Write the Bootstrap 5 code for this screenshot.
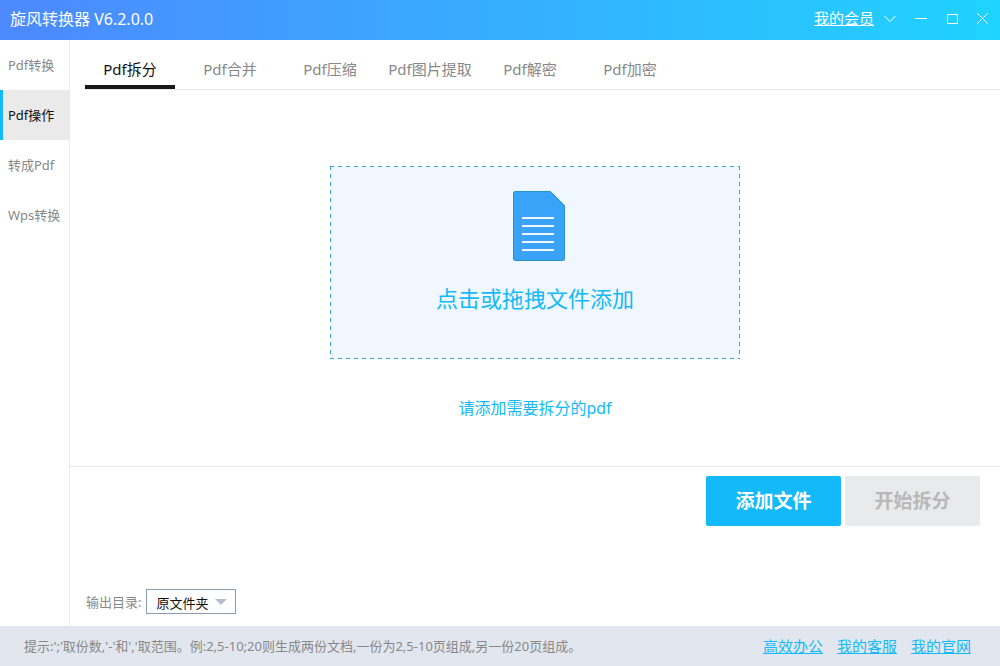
<!DOCTYPE html>
<html lang="zh-CN">
<head>
<meta charset="utf-8">
<meta name="viewport" content="width=device-width, initial-scale=1">
<title>旋风转换器</title>
<link href="https://cdn.jsdelivr.net/npm/bootstrap@5.3.0/dist/css/bootstrap.min.css" rel="stylesheet">
<style>
  :root { --accent: #14b9f9; --line: #e9e9e9; --dim: #888; }
  body { font-family: "Noto Sans", "Noto Sans CJK SC", sans-serif; font-size: 13px; line-height: 20px; color: var(--dim); background: #fff; }
  .title-bar { height: 40px; background: linear-gradient(90deg, #4d88ff, #1fd3ff); color: #fff; padding: 0 11px 2px 10px; }
  .app-title { font-size: 16px; font-weight: 400; line-height: 20px; }
  .title-bar a { margin-right: 10px; padding-bottom: 2px; font-size: 15px; color: #fff; }
  .win-btns { gap: 19px; }
  .win-btn { width: 12px; height: 12px; color: #fff; }
  .win-btn svg { display: block; }
  .side-nav { width: 70px; border-right: 1px solid var(--line); }
  .side-nav .nav-link { height: 50px; padding: 15px 0 15px 8px; color: var(--dim); white-space: nowrap; line-height: 20px; }
  .side-nav .nav-link.active { background: #eaeaea; color: #111; border-left: 3px solid var(--accent); padding-left: 5px; }
  .tab-row { height: 50px; margin-left: 15px; gap: 10px; border-bottom: 1px solid var(--line); }
  .tab-row .nav-link { width: 90px; height: 49px; padding: 19px 0 6px; border-bottom: 4px solid transparent; border-radius: 0; font-size: 15px; line-height: 20px; text-align: center; white-space: nowrap; color: var(--dim); }
  .tab-row .nav-link.active { color: #111; border-color: #181818; }
  .drop-zone { width: 410px; max-width: 100%; height: 193px; margin-top: 76px; padding: 25px 0 0; border: 0; color: var(--accent); font-size: 22px; line-height: 30px;
    --h: repeating-linear-gradient(90deg, #3ba4ca 0 4px, transparent 4px 8px);
    --v: repeating-linear-gradient(180deg, #3ba4ca 0 4px, transparent 4px 8px);
    background: var(--h) top / 100% 1px no-repeat, var(--h) bottom / 100% 1px no-repeat, var(--v) left / 1px 100% no-repeat, var(--v) right / 1px 100% no-repeat, #f0f7ff; }
  .drop-zone svg { margin: 0 0 22px 8px; }
  .hint { margin-top: 39px; font-size: 16px; color: var(--accent); }
  .action-pane { height: 160px; border-top: 1px solid var(--line); padding: 9px 20px 12px 16px; }
  .big-btn { width: 135px; height: 50px; padding: 0; border: 0; border-radius: 2px; font-size: 19px; font-weight: 700; color: #fff; background: var(--accent); }
  .big-btn:hover { color: #fff; background: #0fabea; }
  .big-btn:disabled { color: #b8b8b8; background: #e9eaec; opacity: 1; }
  .dir-label { margin-right: 5px; }
  .dir-select { width: 90px; height: 25px; padding: 2px 0 0 9px; border: 1px solid #8c9bb0; border-radius: 0; font-size: 13px; line-height: 20px; color: #111; background-color: #fff; background-position: right 8px center; background-size: 12px 6px;
    background-image: url("data:image/svg+xml,%3csvg xmlns='http://www.w3.org/2000/svg' viewBox='0 0 12 6'%3e%3cpath fill='%23b3bfca' d='M0 0h12L6 6z'/%3e%3c/svg%3e"); }
  .status-bar { height: 40px; padding: 0 29px 0 24px; background: #e2e7ef; }
  .status-bar nav { gap: 14px; }
  .status-bar a { font-size: 15px; color: var(--accent); }
</style>
</head>
<body>
<div class="d-flex flex-column min-vh-100">
  <header class="title-bar d-flex align-items-center">
    <h1 class="app-title mb-0 me-auto">旋风转换器 V6.2.0.0</h1>
    <a href="#">我的会员</a>
    <div class="win-btns d-flex">
      <button class="btn p-0 border-0 rounded-0 win-btn" aria-label="展开菜单"><svg width="12" height="12" viewBox="0 0 12 12" fill="none" stroke="currentColor"><path d="M.5 3 6 8.500 11.500 3"/></svg></button>
      <button class="btn p-0 border-0 rounded-0 win-btn" aria-label="最小化"><svg width="12" height="12" viewBox="0 0 12 12" fill="none" stroke="currentColor"><path d="M0 5.500h12"/></svg></button>
      <button class="btn p-0 border-0 rounded-0 win-btn" aria-label="最大化"><svg width="12" height="12" viewBox="0 0 12 12" fill="none" stroke="currentColor"><path d="M1.500 1.500h10v9h-10z"/></svg></button>
      <button class="btn p-0 border-0 rounded-0 win-btn" aria-label="关闭"><svg width="12" height="12" viewBox="0 0 12 12" fill="none" stroke="currentColor"><path d="m0 0 11 11M11 0 0 11"/></svg></button>
    </div>
  </header>

  <div class="d-flex flex-grow-1">
    <nav class="side-nav nav flex-column flex-nowrap flex-shrink-0" aria-label="功能">
      <a class="nav-link" href="#">Pdf转换</a>
      <a class="nav-link active" href="#" aria-current="page">Pdf操作</a>
      <a class="nav-link" href="#">转成Pdf</a>
      <a class="nav-link" href="#">Wps转换</a>
    </nav>

    <main class="d-flex flex-column flex-grow-1">
      <nav class="tab-row nav flex-nowrap" aria-label="Pdf操作">
        <a class="nav-link active" href="#" aria-current="page">Pdf拆分</a>
        <a class="nav-link" href="#">Pdf合并</a>
        <a class="nav-link" href="#">Pdf压缩</a>
        <a class="nav-link" href="#">Pdf图片提取</a>
        <a class="nav-link" href="#">Pdf解密</a>
        <a class="nav-link" href="#">Pdf加密</a>
      </nav>

      <section class="d-flex flex-column align-items-center flex-grow-1">
        <button class="drop-zone d-flex flex-column align-items-center">
          <svg width="52" height="70" viewBox="0 0 52 70" aria-hidden="true">
            <path d="M1.500.5h36l14 14v54l-1 1h-49l-1-1v-67z" fill="#38a3f8" stroke="#2895c3"/>
            <path d="M9 27h32M9 35h32M9 43h32M9 51h32M9 59h32" stroke="#f0f7ff" stroke-width="2"/>
          </svg>
          <span>点击或拖拽文件添加</span>
        </button>
        <p class="hint mb-0">请添加需要拆分的pdf</p>
      </section>

      <section class="action-pane d-flex flex-column justify-content-between">
        <div class="d-flex justify-content-end gap-1">
          <button class="btn big-btn">添加文件</button>
          <button class="btn big-btn" disabled>开始拆分</button>
        </div>
        <div class="d-flex align-items-center">
          <label class="dir-label" for="out-dir">输出目录:</label>
          <select class="form-select dir-select" id="out-dir"><option>原文件夹</option></select>
        </div>
      </section>
    </main>
  </div>

  <footer class="status-bar d-flex align-items-center">
    <span class="me-auto">提示:';'取份数,'-'和','取范围。例:2,5-10;20则生成两份文档,一份为2,5-10页组成,另一份20页组成。</span>
    <nav class="d-flex" aria-label="链接">
      <a href="#">高效办公</a>
      <a href="#">我的客服</a>
      <a href="#">我的官网</a>
    </nav>
  </footer>
</div>
<script src="https://cdn.jsdelivr.net/npm/bootstrap@5.3.0/dist/js/bootstrap.bundle.min.js"></script>
</body>
</html>
